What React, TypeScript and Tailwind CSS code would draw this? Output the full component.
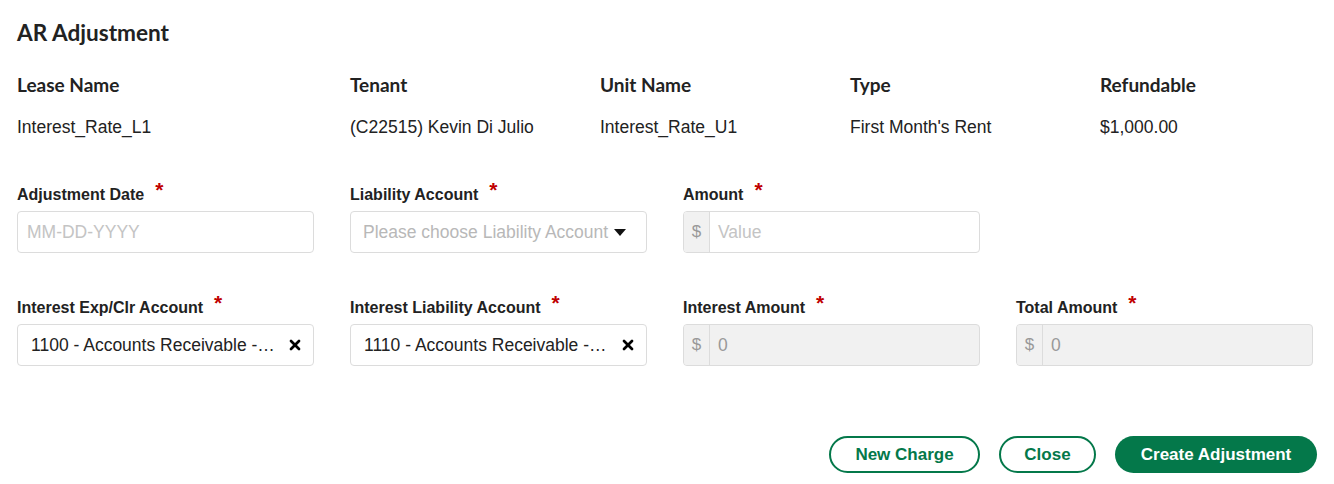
import { X } from 'lucide-react';

const lato = { fontFamily: 'Lato, "Liberation Sans", sans-serif' };

function Label({ children }: { children: React.ReactNode }) {
  return (
    <div className="flex h-[22px] items-start text-[16px] font-bold text-[#222]">
      <span className="mt-[5px] leading-[20px]">{children}</span>
      <span className="ml-[11px] text-[21px] leading-[20px] text-[#c00000]">*</span>
    </div>
  );
}

function MoneyInput({ value, placeholder, disabled }: { value?: string; placeholder?: string; disabled?: boolean }) {
  return (
    <div
      className={`mt-[9px] flex h-[42px] items-stretch overflow-hidden rounded-[4px] border border-[#dcdcdc] ${
        disabled ? 'bg-[#f1f1f1]' : 'bg-white'
      }`}
    >
      <span className="flex w-[26px] items-center justify-center border-r border-[#dcdcdc] bg-[#f1f1f1] text-[17px] text-[#999]">
        $
      </span>
      <span className={`flex items-center pl-[8px] text-[17.5px] ${value ? 'text-[#999]' : 'text-[#c4c4c4]'}`}>
        {value ?? placeholder}
      </span>
    </div>
  );
}

function SelectedInput({ value }: { value: string }) {
  return (
    <div className="mt-[9px] flex h-[42px] items-center justify-between rounded-[4px] border border-[#dcdcdc] bg-white pl-[13px] pr-[10px]">
      <span className="whitespace-nowrap text-[17.5px] text-[#222]">{value}</span>
      <X className="size-[16px] shrink-0 text-black" strokeWidth={4} />
    </div>
  );
}

const info = [
  ['Lease Name', 'Interest_Rate_L1'],
  ['Tenant', '(C22515) Kevin Di Julio'],
  ['Unit Name', 'Interest_Rate_U1'],
  ['Type', "First Month's Rent"],
  ['Refundable', '$1,000.00'],
];

export default function App() {
  return (
    <div
      className="h-[484px] w-[1334px] bg-white pl-[17px] text-[#222]"
      style={{ fontFamily: '"Liberation Sans", Arial, sans-serif' }}
    >
      <h1 className="pt-[20px] text-[22.6px] font-bold leading-[26px]" style={lato}>
        AR Adjustment
      </h1>

      <div className="mt-[28px] grid grid-cols-[333px_250px_250px_250px_1fr]">
        {info.map(([label, value]) => (
          <div key={label}>
            <div className="text-[19px] font-bold leading-[22px]" style={lato}>
              {label}
            </div>
            <div className="mt-[21px] text-[17.5px] leading-[20px]">{value}</div>
          </div>
        ))}
      </div>

      <div className="mt-[43px] grid grid-cols-[297px_297px_297px_297px] gap-x-[36px] gap-y-[40px]">
        <div>
          <Label>Adjustment Date</Label>
          <div className="mt-[9px] flex h-[42px] items-center rounded-[4px] border border-[#dcdcdc] bg-white pl-[9px] text-[17.5px] text-[#c4c4c4]">
            MM-DD-YYYY
          </div>
        </div>
        <div>
          <Label>Liability Account</Label>
          <div className="mt-[9px] flex h-[42px] items-center rounded-[4px] border border-[#dcdcdc] bg-white pl-[12px] text-[17.5px] text-[#b8b8b8]">
            <span className="whitespace-nowrap">Please choose Liability Account</span>
            <svg className="ml-[6px] shrink-0" width="12" height="7" viewBox="0 0 12 7">
              <path d="M0 0 L12 0 L6 7 Z" fill="#111" />
            </svg>
          </div>
        </div>
        <div>
          <Label>Amount</Label>
          <MoneyInput placeholder="Value" />
        </div>
        <div />

        <div>
          <Label>Interest Exp/Clr Account</Label>
          <SelectedInput value="1100 - Accounts Receivable -…" />
        </div>
        <div>
          <Label>Interest Liability Account</Label>
          <SelectedInput value="1110 - Accounts Receivable -…" />
        </div>
        <div>
          <Label>Interest Amount</Label>
          <MoneyInput value="0" disabled />
        </div>
        <div>
          <Label>Total Amount</Label>
          <MoneyInput value="0" disabled />
        </div>
      </div>

      <div className="mt-[70px] flex justify-end gap-[19px] pr-[17px]">
        <button className="h-[37px] w-[151px] rounded-full border-2 border-[#04784a] text-[17px] font-bold text-[#04784a]">
          New Charge
        </button>
        <button className="h-[37px] w-[97px] rounded-full border-2 border-[#04784a] text-[17px] font-bold text-[#04784a]">
          Close
        </button>
        <button className="h-[37px] w-[202px] rounded-full bg-[#04784a] text-[17px] font-bold text-white">
          Create Adjustment
        </button>
      </div>
    </div>
  );
}
